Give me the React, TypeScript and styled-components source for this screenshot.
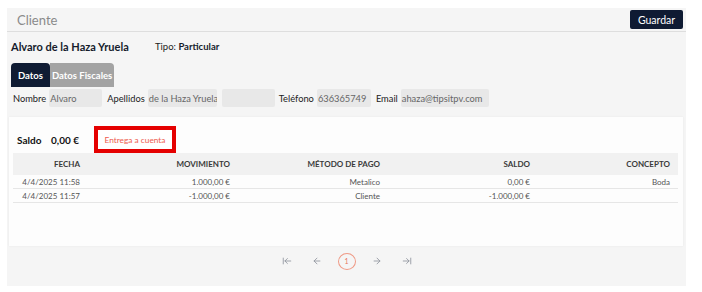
import React from 'react';
import styled, { createGlobalStyle } from 'styled-components';
import { ArrowLeft, ArrowLeftToLine, ArrowRight, ArrowRightToLine } from 'lucide-react';

const GlobalStyle = createGlobalStyle`
  body {
    margin: 0;
    background: #ffffff;
    font-family: Lato, "Noto Sans", sans-serif;
  }
`;

const Page = styled.div`
  padding: 8px 16px 6px 7px;
`;

const Panel = styled.div`
  width: 679px;
  height: 278px;
  background: #f5f5f5;
  display: flex;
  flex-direction: column;
`;

const Header = styled.div`
  height: 23px;
  border-bottom: 1px solid #dedede;
  display: flex;
  align-items: center;
  justify-content: space-between;
  padding: 0 3px 0 10px;
`;

const Title = styled.span`
  font-size: 13px;
  color: #8a8a8a;
`;

const SaveButton = styled.button`
  height: 19px;
  width: 53px;
  padding: 0;
  border: none;
  border-radius: 2px;
  background: #0f1b33;
  color: #ffffff;
  font-family: inherit;
  font-size: 10.5px;
`;

const Body = styled.div`
  padding: 0 4px;
`;

const NameRow = styled.div`
  display: flex;
  align-items: center;
  height: 16px;
  margin-top: 6px;
`;

const Name = styled.span`
  font-size: 11px;
  font-weight: 700;
  color: #161c2c;
  width: 144px;
`;

const Tipo = styled.span`
  font-size: 9.5px;
  color: #222;
  b {
    font-weight: 700;
    color: #161c2c;
  }
`;

const Tabs = styled.div`
  display: flex;
  margin-top: 9px;
  height: 24px;
`;

const Tab = styled.div<{ $active?: boolean }>`
  display: flex;
  align-items: center;
  padding: 0 ${p => (p.$active ? '7px' : '2px')};
  background: ${p => (p.$active ? '#0f1b33' : '#a3a3a3')};
  color: #ffffff;
  font-size: 9.5px;
  font-weight: 700;
  border-radius: ${p => (p.$active ? '4px 4px 0 0' : '0 4px 0 0')};
`;

const Fields = styled.div`
  display: flex;
  align-items: center;
  height: 18px;
  margin-top: 2px;
  padding-left: 2px;
  white-space: nowrap;
`;

const Label = styled.span`
  font-size: 9.3px;
  color: #222;
  margin-right: 3px;
`;

const Field = styled.div<{ $w: number; $gap?: number }>`
  width: ${p => p.$w}px;
  height: 18px;
  background: #e8e8e8;
  border-radius: 2px;
  font-size: 9.3px;
  color: #666;
  display: flex;
  align-items: center;
  padding-left: 1px;
  box-sizing: border-box;
  overflow: hidden;
  margin-right: ${p => p.$gap ?? 5}px;
`;

const Card = styled.div`
  margin: 10px 3px 0 2px;
  height: 129px;
  background: #fdfdfd;
  box-shadow: 0 0 2px rgba(0, 0, 0, 0.06);
  padding: 9px 5px 0 4px;
  box-sizing: border-box;
`;

const SaldoRow = styled.div`
  display: flex;
  align-items: center;
  height: 27px;
`;

const SaldoText = styled.span`
  font-size: 10px;
  font-weight: 700;
  color: #111;
  margin-left: 4px;
  width: 34px;
`;

const SaldoValue = styled(SaldoText)`
  margin-left: 0;
  width: 43px;
`;

const EntregaButton = styled.button`
  height: 27px;
  width: 82px;
  border: 4px solid #e50000;
  background: #ffffff;
  color: #ee5b4f;
  font-family: inherit;
  font-size: 8.3px;
  padding: 0;
`;

const Row = styled.div<{ $head?: boolean }>`
  display: grid;
  grid-template-columns: 75px 150px 150px 150px 1fr;
  align-items: center;
  height: ${p => (p.$head ? '22px' : '13px')};
  background: ${p => (p.$head ? '#f1f1f1' : 'transparent')};
  border-bottom: ${p => (p.$head ? 'none' : '1px solid #e6e6e6')};
  font-size: 8px;
  font-weight: ${p => (p.$head ? 700 : 400)};
  color: ${p => (p.$head ? '#3a3a3a' : '#555')};
`;

const Cell = styled.span`
  text-align: right;
  padding-right: 8px;
`;

const Pager = styled.div`
  flex: 1;
  display: flex;
  align-items: center;
  justify-content: center;
  padding-bottom: 10px;
  color: #8e939c;
`;

const PagerIcon = styled.span`
  display: flex;
  width: 30px;
  justify-content: center;
`;

const PageNum = styled.span`
  width: 16px;
  height: 15px;
  border: 1px solid #ef9a86;
  border-radius: 50%;
  display: flex;
  align-items: center;
  justify-content: center;
  font-size: 7px;
  color: #e8735f;
  margin: 0 6px;
`;

const rows = [
  ['4/4/2025 11:58', '1.000,00 €', 'Metalico', '0,00 €', 'Boda'],
  ['4/4/2025 11:57', '-1.000,00 €', 'Cliente', '-1.000,00 €', ''],
];

export default function App() {
  return (
    <Page>
      <GlobalStyle />
      <Panel>
        <Header>
          <Title>Cliente</Title>
          <SaveButton>Guardar</SaveButton>
        </Header>
        <Body>
          <NameRow>
            <Name>Alvaro de la Haza Yruela</Name>
            <Tipo>Tipo: <b>Particular</b></Tipo>
          </NameRow>
          <Tabs>
            <Tab $active>Datos</Tab>
            <Tab>Datos Fiscales</Tab>
          </Tabs>
          <Fields>
            <Label>Nombre</Label>
            <Field $w={53}>Alvaro</Field>
            <Label>Apellidos</Label>
            <Field $w={69}>de la Haza Yruela</Field>
            <Field $w={53} $gap={4} />
            <Label>Teléfono</Label>
            <Field $w={54}>636365749</Field>
            <Label>Email</Label>
            <Field $w={88}>ahaza@tipsitpv.com</Field>
          </Fields>
        </Body>
        <Card>
          <SaldoRow>
            <SaldoText>Saldo</SaldoText>
            <SaldoValue>0,00 €</SaldoValue>
            <EntregaButton>Entrega a cuenta</EntregaButton>
          </SaldoRow>
          <Row $head>
            <Cell>FECHA</Cell>
            <Cell>MOVIMIENTO</Cell>
            <Cell>MÉTODO DE PAGO</Cell>
            <Cell>SALDO</Cell>
            <Cell>CONCEPTO</Cell>
          </Row>
          {rows.map((r, i) => (
            <Row key={i}>
              {r.map((c, j) => (
                <Cell key={j}>{c}</Cell>
              ))}
            </Row>
          ))}
        </Card>
        <Pager>
          <PagerIcon><ArrowLeftToLine size={10} strokeWidth={2} /></PagerIcon>
          <PagerIcon><ArrowLeft size={10} strokeWidth={2} /></PagerIcon>
          <PageNum>1</PageNum>
          <PagerIcon><ArrowRight size={10} strokeWidth={2} /></PagerIcon>
          <PagerIcon><ArrowRightToLine size={10} strokeWidth={2} /></PagerIcon>
        </Pager>
      </Panel>
    </Page>
  );
}
